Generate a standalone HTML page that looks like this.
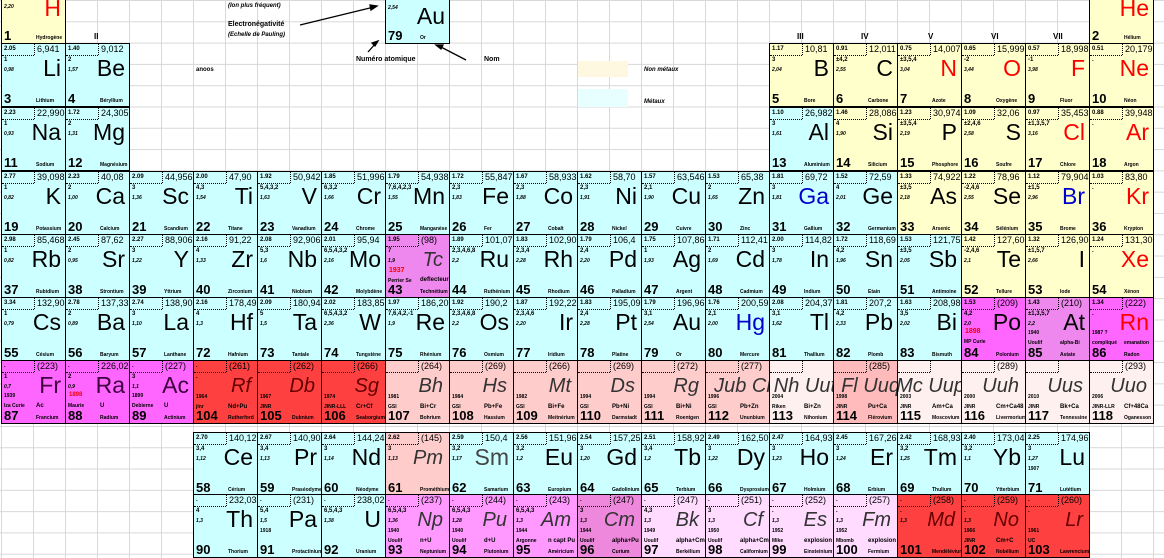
<!DOCTYPE html>
<html><head><meta charset="utf-8">
<style>
html,body{margin:0;padding:0}
body{width:1164px;height:557px;position:relative;overflow:hidden;background-color:#fff;
background-image:linear-gradient(to right,#d8d8d8 1px,transparent 1px),linear-gradient(to bottom,#d8d8d8 1px,transparent 1px);
background-size:32px 21.3px;background-position:1px 0;font-family:"Liberation Sans",sans-serif}
.e{position:absolute;width:65px;height:64px;border:1px solid #000;box-sizing:border-box;overflow:hidden;color:#000}
.e::before{content:"";position:absolute;left:0;top:11px;width:32px;border-top:1px dotted #000}
.e i,.e b{position:absolute;white-space:nowrap;font-style:normal}
.en{left:2px;top:2px;font-weight:bold;font-size:6px}
.m{left:32px;top:0;font-size:9px;border-left:1px dotted #000;padding-left:2px;height:11px;line-height:11px}
.o{left:2px;top:13px;font-weight:bold;font-size:6px}
.r{left:2px;top:23px;font-style:italic!important;font-weight:bold;font-size:5px}
.s{right:4px;top:11px;font-size:23px;font-weight:normal}
.s.it{font-style:italic!important;color:#333;font-size:20px;top:14px;right:6px}
.n{left:2px;bottom:0px;font-weight:bold;font-size:13px}
.nm{left:34px;bottom:2px;font-weight:bold;font-size:5px}
.c{background:#ccffff}.y{background:#ffffcc}.m1{background:#ff66ff}.v{background:#ee88ee}
.rd{background:#ff4040}.p{background:#ffcccc}.q{background:#fff0f0}.f{background:#ffbbbb}
.a{background:#ff99ff}.a2{background:#ee88dd}.l{background:#ffdcff}
.red .s{color:#f00}.blu .s{color:#00c}
.lbl{position:absolute;font-weight:bold;font-size:8px}
.t{position:absolute;font-size:6px;font-weight:bold}
</style></head><body>

<div class="lbl" style="left:94px;top:32px">II</div>
<div class="lbl" style="left:797px;top:32px">III</div>
<div class="lbl" style="left:861px;top:32px">IV</div>
<div class="lbl" style="left:928px;top:32px">V</div>
<div class="lbl" style="left:991px;top:32px">VI</div>
<div class="lbl" style="left:1053px;top:32px">VII</div>

<div class="t" style="left:228px;top:3px;font-style:italic">(Ion plus fréquent)</div>
<div class="t" style="left:228px;top:21px;font-size:7px">Electronégativité</div>
<div class="t" style="left:228px;top:32px;font-style:italic">(Echelle de Pauling)</div>
<div class="t" style="left:356px;top:56px;font-size:7px">Numéro atomique</div>
<div class="t" style="left:484px;top:56px;font-size:7px">Nom</div>
<div class="t" style="left:196px;top:67px">anoos</div>
<div style="position:absolute;left:578px;top:61px;width:50px;height:16px;background:#fff8e0"></div>
<div style="position:absolute;left:578px;top:89px;width:50px;height:18px;background:#e8ffff"></div>
<div class="t" style="left:644px;top:67px;font-style:italic">Non métaux</div>
<div class="t" style="left:644px;top:99px;font-style:italic">Métaux</div>
<svg style="position:absolute;left:0;top:0" width="1164" height="557">
<g stroke="#000" stroke-width="1.3" fill="#000">
<line x1="300" y1="25" x2="374" y2="7"/><polygon points="377,6 370,5 371,10"/>
<line x1="368" y1="52" x2="376" y2="43"/><polygon points="378,41 372,43 375,46"/>
<line x1="466" y1="60" x2="439" y2="46"/><polygon points="436,45 443,45 441,49"/>
</g></svg>

<div class="e c" style="left:385px;top:-20px"><i class="r" style="top:24px">2,54</i><b class="s" style="top:22px">Au</b><b class="n">79</b><i class="nm">Or</i></div>

<div class="e y red" style="left:1px;top:-20px"><i class="r">2,20</i><b class="s" style="top:14px">H</b><b class="n">1</b><i class="nm">Hydrogène</i></div>
<div class="e y red" style="left:1089px;top:-20px"><i class="o">.</i><b class="s" style="top:14px">He</b><b class="n">2</b><i class="nm">Hélium</i></div>

<div class="e c" style="left:1px;top:43px"><i class="en">2.05</i><i class="m">6,941</i><i class="o">1</i><i class="r">0,98</i><b class="s">Li</b><b class="n">3</b><i class="nm">Lithium</i></div>
<div class="e c" style="left:65px;top:43px"><i class="en">1.40</i><i class="m">9,012</i><i class="o">2</i><i class="r">1,57</i><b class="s">Be</b><b class="n">4</b><i class="nm">Béryllium</i></div>
<div class="e y" style="left:769px;top:43px"><i class="en">1.17</i><i class="m">10,81</i><i class="o">3</i><i class="r">2,04</i><b class="s">B</b><b class="n">5</b><i class="nm">Bore</i></div>
<div class="e y" style="left:833px;top:43px"><i class="en">0.91</i><i class="m">12,011</i><i class="o">±4,2</i><i class="r">2,55</i><b class="s">C</b><b class="n">6</b><i class="nm">Carbone</i></div>
<div class="e y red" style="left:897px;top:43px"><i class="en">0.75</i><i class="m">14,007</i><i class="o">±3,5,4</i><i class="r">3,04</i><b class="s">N</b><b class="n">7</b><i class="nm">Azote</i></div>
<div class="e y red" style="left:961px;top:43px"><i class="en">0.65</i><i class="m">15,999</i><i class="o">-2</i><i class="r">3,44</i><b class="s">O</b><b class="n">8</b><i class="nm">Oxygène</i></div>
<div class="e y red" style="left:1025px;top:43px"><i class="en">0.57</i><i class="m">18,998</i><i class="o">-1</i><i class="r">3,98</i><b class="s">F</b><b class="n">9</b><i class="nm">Fluor</i></div>
<div class="e y red" style="left:1089px;top:43px"><i class="en">0.51</i><i class="m">20,179</i><i class="o">.</i><b class="s">Ne</b><b class="n">10</b><i class="nm">Néon</i></div>

<div class="e c" style="left:1px;top:107px"><i class="en">2.23</i><i class="m">22,990</i><i class="o">1</i><i class="r">0,93</i><b class="s">Na</b><b class="n">11</b><i class="nm">Sodium</i></div>
<div class="e c" style="left:65px;top:107px"><i class="en">1.72</i><i class="m">24,305</i><i class="o">2</i><i class="r">1,31</i><b class="s">Mg</b><b class="n">12</b><i class="nm">Magnésium</i></div>
<div class="e c" style="left:769px;top:107px"><i class="en">1.10</i><i class="m">26,982</i><i class="o">3</i><i class="r">1,61</i><b class="s">Al</b><b class="n">13</b><i class="nm">Aluminium</i></div>
<div class="e y" style="left:833px;top:107px"><i class="en">1.46</i><i class="m">28,086</i><i class="o">4</i><i class="r">1,90</i><b class="s">Si</b><b class="n">14</b><i class="nm">Silicium</i></div>
<div class="e y" style="left:897px;top:107px"><i class="en">1.23</i><i class="m">30,974</i><i class="o">±3,5,4</i><i class="r">2,19</i><b class="s">P</b><b class="n">15</b><i class="nm">Phosphore</i></div>
<div class="e y" style="left:961px;top:107px"><i class="en">1.09</i><i class="m">32,06</i><i class="o">±2,4,6</i><i class="r">2,58</i><b class="s">S</b><b class="n">16</b><i class="nm">Soufre</i></div>
<div class="e y red" style="left:1025px;top:107px"><i class="en">0.97</i><i class="m">35,453</i><i class="o">±1,3,5,7</i><i class="r">3,16</i><b class="s">Cl</b><b class="n">17</b><i class="nm">Chlore</i></div>
<div class="e y red" style="left:1089px;top:107px"><i class="en">0.88</i><i class="m">39,948</i><i class="o">.</i><b class="s">Ar</b><b class="n">18</b><i class="nm">Argon</i></div>

<div class="e c" style="left:1px;top:171px"><i class="en">2.77</i><i class="m">39,098</i><i class="o">1</i><i class="r">0,82</i><b class="s">K</b><b class="n">19</b><i class="nm">Potassium</i></div>
<div class="e c" style="left:65px;top:171px"><i class="en">2.23</i><i class="m">40,08</i><i class="o">2</i><i class="r">1,00</i><b class="s">Ca</b><b class="n">20</b><i class="nm">Calcium</i></div>
<div class="e c" style="left:129px;top:171px"><i class="en">2.09</i><i class="m">44,956</i><i class="o">3</i><i class="r">1,36</i><b class="s">Sc</b><b class="n">21</b><i class="nm">Scandium</i></div>
<div class="e c" style="left:193px;top:171px"><i class="en">2.00</i><i class="m">47,90</i><i class="o">4,3</i><i class="r">1,54</i><b class="s">Ti</b><b class="n">22</b><i class="nm">Titane</i></div>
<div class="e c" style="left:257px;top:171px"><i class="en">1.92</i><i class="m">50,942</i><i class="o">5,4,3,2</i><i class="r">1,63</i><b class="s">V</b><b class="n">23</b><i class="nm">Vanadium</i></div>
<div class="e c" style="left:321px;top:171px"><i class="en">1.85</i><i class="m">51,996</i><i class="o">6,3,2</i><i class="r">1,66</i><b class="s">Cr</b><b class="n">24</b><i class="nm">Chrome</i></div>
<div class="e c" style="left:385px;top:171px"><i class="en">1.79</i><i class="m">54,938</i><i class="o">7,6,4,2,3</i><i class="r">1,55</i><b class="s">Mn</b><b class="n">25</b><i class="nm">Manganèse</i></div>
<div class="e c" style="left:449px;top:171px"><i class="en">1.72</i><i class="m">55,847</i><i class="o">2,3</i><i class="r">1,83</i><b class="s">Fe</b><b class="n">26</b><i class="nm">Fer</i></div>
<div class="e c" style="left:513px;top:171px"><i class="en">1.67</i><i class="m">58,933</i><i class="o">2,3</i><i class="r">1,88</i><b class="s">Co</b><b class="n">27</b><i class="nm">Cobalt</i></div>
<div class="e c" style="left:577px;top:171px"><i class="en">1.62</i><i class="m">58,70</i><i class="o">2,3</i><i class="r">1,91</i><b class="s">Ni</b><b class="n">28</b><i class="nm">Nickel</i></div>
<div class="e c" style="left:641px;top:171px"><i class="en">1.57</i><i class="m">63,546</i><i class="o">2,1</i><i class="r">1,90</i><b class="s">Cu</b><b class="n">29</b><i class="nm">Cuivre</i></div>
<div class="e c" style="left:705px;top:171px"><i class="en">1.53</i><i class="m">65,38</i><i class="o">2</i><i class="r">1,65</i><b class="s">Zn</b><b class="n">30</b><i class="nm">Zinc</i></div>
<div class="e c blu" style="left:769px;top:171px"><i class="en">1.81</i><i class="m">69,72</i><i class="o">3</i><i class="r">1,81</i><b class="s">Ga</b><b class="n">31</b><i class="nm">Gallium</i></div>
<div class="e c" style="left:833px;top:171px"><i class="en">1.52</i><i class="m">72,59</i><i class="o">4</i><i class="r">2,01</i><b class="s">Ge</b><b class="n">32</b><i class="nm">Germanium</i></div>
<div class="e y" style="left:897px;top:171px"><i class="en">1.33</i><i class="m">74,922</i><i class="o">±3,5</i><i class="r">2,18</i><b class="s">As</b><b class="n">33</b><i class="nm">Arsenic</i></div>
<div class="e y" style="left:961px;top:171px"><i class="en">1.22</i><i class="m">78,96</i><i class="o">-2,4,6</i><i class="r">2,55</i><b class="s">Se</b><b class="n">34</b><i class="nm">Sélénium</i></div>
<div class="e y blu" style="left:1025px;top:171px"><i class="en">1.12</i><i class="m">79,904</i><i class="o">±1,5</i><i class="r">2,96</i><b class="s">Br</b><b class="n">35</b><i class="nm">Brome</i></div>
<div class="e y red" style="left:1089px;top:171px"><i class="en">1.03</i><i class="m">83,80</i><i class="o">.</i><b class="s">Kr</b><b class="n">36</b><i class="nm">Krypton</i></div>

<div class="e c" style="left:1px;top:234px"><i class="en">2.98</i><i class="m">85,468</i><i class="o">1</i><i class="r">0,82</i><b class="s">Rb</b><b class="n">37</b><i class="nm">Rubidium</i></div>
<div class="e c" style="left:65px;top:234px"><i class="en">2.45</i><i class="m">87,62</i><i class="o">2</i><i class="r">0,95</i><b class="s">Sr</b><b class="n">38</b><i class="nm">Strontium</i></div>
<div class="e c" style="left:129px;top:234px"><i class="en">2.27</i><i class="m">88,906</i><i class="o">3</i><i class="r">1,22</i><b class="s">Y</b><b class="n">39</b><i class="nm">Yttrium</i></div>
<div class="e c" style="left:193px;top:234px"><i class="en">2.16</i><i class="m">91,22</i><i class="o">4</i><i class="r">1,33</i><b class="s">Zr</b><b class="n">40</b><i class="nm">Zirconium</i></div>
<div class="e c" style="left:257px;top:234px"><i class="en">2.08</i><i class="m">92,906</i><i class="o">5,3</i><i class="r">1,6</i><b class="s">Nb</b><b class="n">41</b><i class="nm">Niobium</i></div>
<div class="e c" style="left:321px;top:234px"><i class="en">2.01</i><i class="m">95,94</i><i class="o">6,5,4,3,2</i><i class="r">2,16</i><b class="s">Mo</b><b class="n">42</b><i class="nm">Molybdène</i></div>
<div class="e v" style="left:385px;top:234px"><i class="en">1.95</i><i class="m">(98)</i><i class="o">7</i><i class="r">1,9</i><b class="s it">Tc</b><b style="left:3px;top:32px;font-size:7px;color:#e00;font-weight:bold">1937</b><i class="t" style="left:2px;top:43px;font-size:5px">Perrier Se</i><i class="t" style="left:34px;top:42px;font-size:6px">deflecteur</i><b class="n">43</b><i class="nm">Technétium</i></div>
<div class="e c" style="left:449px;top:234px"><i class="en">1.89</i><i class="m">101,07</i><i class="o">2,3,4,6,8</i><i class="r">2,2</i><b class="s">Ru</b><b class="n">44</b><i class="nm">Ruthénium</i></div>
<div class="e c" style="left:513px;top:234px"><i class="en">1.83</i><i class="m">102,906</i><i class="o">2,3,4</i><i class="r">2,28</i><b class="s">Rh</b><b class="n">45</b><i class="nm">Rhodium</i></div>
<div class="e c" style="left:577px;top:234px"><i class="en">1.79</i><i class="m">106,4</i><i class="o">2,4</i><i class="r">2,20</i><b class="s">Pd</b><b class="n">46</b><i class="nm">Palladium</i></div>
<div class="e c" style="left:641px;top:234px"><i class="en">1.75</i><i class="m">107,868</i><i class="o">1</i><i class="r">1,93</i><b class="s">Ag</b><b class="n">47</b><i class="nm">Argent</i></div>
<div class="e c" style="left:705px;top:234px"><i class="en">1.71</i><i class="m">112,41</i><i class="o">2</i><i class="r">1,69</i><b class="s">Cd</b><b class="n">48</b><i class="nm">Cadmium</i></div>
<div class="e c" style="left:769px;top:234px"><i class="en">2.00</i><i class="m">114,82</i><i class="o">3</i><i class="r">1,78</i><b class="s">In</b><b class="n">49</b><i class="nm">Indium</i></div>
<div class="e c" style="left:833px;top:234px"><i class="en">1.72</i><i class="m">118,69</i><i class="o">4,2</i><i class="r">1,96</i><b class="s">Sn</b><b class="n">50</b><i class="nm">Etain</i></div>
<div class="e c" style="left:897px;top:234px"><i class="en">1.53</i><i class="m">121,75</i><i class="o">±3,5</i><i class="r">2,05</i><b class="s">Sb</b><b class="n">51</b><i class="nm">Antimoine</i></div>
<div class="e y" style="left:961px;top:234px"><i class="en">1.42</i><i class="m">127,60</i><i class="o">-2,4,6</i><i class="r">2,1</i><b class="s">Te</b><b class="n">52</b><i class="nm">Tellure</i></div>
<div class="e y" style="left:1025px;top:234px"><i class="en">1.32</i><i class="m">126,905</i><i class="o">±1,5,7</i><i class="r">2,66</i><b class="s">I</b><b class="n">53</b><i class="nm">Iode</i></div>
<div class="e y red" style="left:1089px;top:234px"><i class="en">1.24</i><i class="m">131,30</i><i class="o">.</i><b class="s">Xe</b><b class="n">54</b><i class="nm">Xénon</i></div>

<div class="e c" style="left:1px;top:297px"><i class="en">3.34</i><i class="m">132,905</i><i class="o">1</i><i class="r">0,79</i><b class="s">Cs</b><b class="n">55</b><i class="nm">Césium</i></div>
<div class="e c" style="left:65px;top:297px"><i class="en">2.78</i><i class="m">137,33</i><i class="o">2</i><i class="r">0,89</i><b class="s">Ba</b><b class="n">56</b><i class="nm">Baryum</i></div>
<div class="e c" style="left:129px;top:297px"><i class="en">2.74</i><i class="m">138,906</i><i class="o">3</i><i class="r">1,10</i><b class="s">La</b><b class="n">57</b><i class="nm">Lanthane</i></div>
<div class="e c" style="left:193px;top:297px"><i class="en">2.16</i><i class="m">178,49</i><i class="o">4</i><i class="r">1,3</i><b class="s">Hf</b><b class="n">72</b><i class="nm">Hafnium</i></div>
<div class="e c" style="left:257px;top:297px"><i class="en">2.09</i><i class="m">180,948</i><i class="o">5</i><i class="r">1,5</i><b class="s">Ta</b><b class="n">73</b><i class="nm">Tantale</i></div>
<div class="e c" style="left:321px;top:297px"><i class="en">2.02</i><i class="m">183,85</i><i class="o">6,5,4,3,2</i><i class="r">2,36</i><b class="s">W</b><b class="n">74</b><i class="nm">Tungstène</i></div>
<div class="e c" style="left:385px;top:297px"><i class="en">1.97</i><i class="m">186,207</i><i class="o">7,6,4,2,-1</i><i class="r">1,9</i><b class="s">Re</b><b class="n">75</b><i class="nm">Rhénium</i></div>
<div class="e c" style="left:449px;top:297px"><i class="en">1.92</i><i class="m">190,2</i><i class="o">2,3,4,6,8</i><i class="r">2,2</i><b class="s">Os</b><b class="n">76</b><i class="nm">Osmium</i></div>
<div class="e c" style="left:513px;top:297px"><i class="en">1.87</i><i class="m">192,22</i><i class="o">2,3,4,6</i><i class="r">2,20</i><b class="s">Ir</b><b class="n">77</b><i class="nm">Iridium</i></div>
<div class="e c" style="left:577px;top:297px"><i class="en">1.83</i><i class="m">195,09</i><i class="o">2,4</i><i class="r">2,28</i><b class="s">Pt</b><b class="n">78</b><i class="nm">Platine</i></div>
<div class="e c" style="left:641px;top:297px"><i class="en">1.79</i><i class="m">196,967</i><i class="o">3,1</i><i class="r">2,54</i><b class="s">Au</b><b class="n">79</b><i class="nm">Or</i></div>
<div class="e c blu" style="left:705px;top:297px"><i class="en">1.76</i><i class="m">200,59</i><i class="o">2,1</i><i class="r">2,00</i><b class="s">Hg</b><b class="n">80</b><i class="nm">Mercure</i></div>
<div class="e c" style="left:769px;top:297px"><i class="en">2.08</i><i class="m">204,37</i><i class="o">3,1</i><i class="r">1,62</i><b class="s">Tl</b><b class="n">81</b><i class="nm">Thallium</i></div>
<div class="e c" style="left:833px;top:297px"><i class="en">1.81</i><i class="m">207,2</i><i class="o">4,2</i><i class="r">2,33</i><b class="s">Pb</b><b class="n">82</b><i class="nm">Plomb</i></div>
<div class="e c" style="left:897px;top:297px"><i class="en">1.63</i><i class="m">208,980</i><i class="o">3,5</i><i class="r">2,02</i><b class="s">Bi</b><b class="n">83</b><i class="nm">Bismuth</i></div>
<div class="e m1" style="left:961px;top:297px"><i class="en">1.53</i><i class="m">(209)</i><i class="o">4,2</i><i class="r">2,0</i><b class="s">Po</b><b style="left:3px;top:30px;font-size:7px;color:#e00;font-weight:bold">1898</b><i class="t" style="left:2px;top:41px;font-size:5px">MP Curie</i><b class="n">84</b><i class="nm">Polonium</i></div>
<div class="e v" style="left:1025px;top:297px"><i class="en">1.43</i><i class="m">(210)</i><i class="o">±1,3,5,7</i><i class="r">2,2</i><b class="s">At</b><i class="t" style="left:2px;top:32px;font-size:5px">1940</i><i class="t" style="left:2px;top:42px;font-size:5px">Uoulif</i><i class="t" style="left:34px;top:42px;font-size:5px">alpha-Bi</i><b class="n">85</b><i class="nm">Astate</i></div>
<div class="e m1 red" style="left:1089px;top:297px"><i class="en">1.34</i><i class="m">(222)</i><i class="o">.</i><b class="s">Rn</b><i class="t" style="left:2px;top:32px;font-size:5px">1987 ?</i><i class="t" style="left:2px;top:42px;font-size:5px">compliqué</i><i class="t" style="left:34px;top:42px;font-size:5px">emanation</i><b class="n">86</b><i class="nm">Radon</i></div>

<div class="e m1" style="left:1px;top:360px"><i class="en">.</i><i class="m">(223)</i><i class="o">1</i><i class="r">0,7</i><b class="s" style="color:#400040">Fr</b><i class="t" style="left:2px;top:32px;font-size:5px">1939</i><i class="t" style="left:2px;top:42px;font-size:5px">Iza Curie</i><i class="t" style="left:34px;top:42px;font-size:6px">Ac</i><b class="n">87</b><i class="nm">Francium</i></div>
<div class="e m1" style="left:65px;top:360px"><i class="en">.</i><i class="m">226,025</i><i class="o">2</i><i class="r">0,9</i><b class="s" style="color:#400040">Ra</b><b style="left:3px;top:31px;font-size:6px;color:#e00;font-weight:bold">1898</b><i class="t" style="left:2px;top:42px;font-size:5px">Maurie</i><i class="t" style="left:34px;top:42px;font-size:6px">U</i><b class="n">88</b><i class="nm">Radium</i></div>
<div class="e m1" style="left:129px;top:360px"><i class="en">.</i><i class="m">(227)</i><i class="o">3</i><i class="r">1,1</i><b class="s" style="color:#400040">Ac</b><i class="t" style="left:2px;top:32px;font-size:5px">1899</i><i class="t" style="left:2px;top:42px;font-size:5px">Debierne</i><i class="t" style="left:34px;top:42px;font-size:6px">U</i><b class="n">89</b><i class="nm">Actinium</i></div>
<div class="e rd" style="left:193px;top:360px"><i class="en">.</i><i class="m">(261)</i><i class="o">.</i><b class="s it" style="color:#600">Rf</b><i class="t" style="left:2px;top:33px;font-size:5px">1964</i><i class="t" style="left:2px;top:43px;font-size:5px">jinr</i><i class="t" style="left:34px;top:43px;font-size:6px">Nd+Pu</i><b class="n">104</b><i class="nm">Rutherford</i></div>
<div class="e rd" style="left:257px;top:360px"><i class="m">(262)</i><b class="s it" style="color:#600">Db</b><i class="t" style="left:2px;top:33px;font-size:5px">1967</i><i class="t" style="left:2px;top:43px;font-size:5px">JINR</i><b class="n">105</b><i class="nm">Dubnium</i></div>
<div class="e rd" style="left:321px;top:360px"><i class="m">(266)</i><b class="s it" style="color:#600">Sg</b><i class="t" style="left:2px;top:33px;font-size:5px">1974</i><i class="t" style="left:2px;top:43px;font-size:5px">JINR-LLL</i><i class="t" style="left:34px;top:43px;font-size:6px">Cr+Cf</i><b class="n">106</b><i class="nm">Seaborgium</i></div>
<div class="e p" style="left:385px;top:360px"><i class="m">(264)</i><b class="s it">Bh</b><i class="t" style="left:2px;top:33px;font-size:5px">1981</i><i class="t" style="left:2px;top:43px;font-size:5px">GSI</i><i class="t" style="left:34px;top:43px;font-size:6px">Bi+Cr</i><b class="n">107</b><i class="nm">Bohrium</i></div>
<div class="e p" style="left:449px;top:360px"><i class="m">(269)</i><b class="s it">Hs</b><i class="t" style="left:2px;top:33px;font-size:5px">1984</i><i class="t" style="left:2px;top:43px;font-size:5px">GSI</i><i class="t" style="left:34px;top:43px;font-size:6px">Pb+Fe</i><b class="n">108</b><i class="nm">Hassium</i></div>
<div class="e p" style="left:513px;top:360px"><i class="m">(266)</i><b class="s it">Mt</b><i class="t" style="left:2px;top:33px;font-size:5px">1982</i><i class="t" style="left:2px;top:43px;font-size:5px">GSI</i><i class="t" style="left:34px;top:43px;font-size:6px">Bi+Fe</i><b class="n">109</b><i class="nm">Meitnérium</i></div>
<div class="e p" style="left:577px;top:360px"><i class="m">(269)</i><b class="s it">Ds</b><i class="t" style="left:2px;top:33px;font-size:5px">1994</i><i class="t" style="left:2px;top:43px;font-size:5px">GSI</i><i class="t" style="left:34px;top:43px;font-size:6px">Pb+Ni</i><b class="n">110</b><i class="nm">Darmstadt</i></div>
<div class="e p" style="left:641px;top:360px"><i class="m">(272)</i><b class="s it">Rg</b><i class="t" style="left:2px;top:33px;font-size:5px">1994</i><i class="t" style="left:2px;top:43px;font-size:5px">GSI</i><i class="t" style="left:34px;top:43px;font-size:6px">Bi+Ni</i><b class="n">111</b><i class="nm">Roentgen</i></div>
<div class="e p" style="left:705px;top:360px"><i class="m">(277)</i><b class="s it" style="right:-4px">Jub Cr</b><i class="t" style="left:2px;top:33px;font-size:5px">1996</i><i class="t" style="left:2px;top:43px;font-size:5px">GSI</i><i class="t" style="left:34px;top:43px;font-size:6px">Pb+Zn</i><b class="n">112</b><i class="nm">Ununbium</i></div>
<div class="e q" style="left:769px;top:360px"><i class="m"></i><b class="s it" style="right:-3px">Nh Uut</b><i class="t" style="left:2px;top:33px;font-size:5px">2004</i><i class="t" style="left:2px;top:43px;font-size:5px">Riken</i><i class="t" style="left:34px;top:43px;font-size:6px">Bi+Zn</i><b class="n">113</b><i class="nm">Nihonium</i></div>
<div class="e f" style="left:833px;top:360px"><i class="m">(285)</i><b class="s it" style="right:-3px">Fl Uuq</b><i class="t" style="left:2px;top:33px;font-size:5px">1998</i><i class="t" style="left:2px;top:43px;font-size:5px">JINR</i><i class="t" style="left:34px;top:43px;font-size:6px">Pu+Ca</i><b class="n">114</b><i class="nm">Flérovium</i></div>
<div class="e q" style="left:897px;top:360px"><i class="m"></i><b class="s it" style="right:-4px">Mc Uup</b><i class="t" style="left:2px;top:33px;font-size:5px">2003</i><i class="t" style="left:2px;top:43px;font-size:5px">JINR</i><i class="t" style="left:34px;top:43px;font-size:6px">Am+Ca</i><b class="n">115</b><i class="nm">Moscovium</i></div>
<div class="e q" style="left:961px;top:360px"><i class="m">(289)</i><b class="s it">Uuh</b><i class="t" style="left:2px;top:33px;font-size:5px">2000</i><i class="t" style="left:2px;top:43px;font-size:5px">JINR</i><i class="t" style="left:34px;top:43px;font-size:6px">Cm+Ca48</i><b class="n">116</b><i class="nm">Livermorium</i></div>
<div class="e q" style="left:1025px;top:360px"><i class="m"></i><b class="s it">Uus</b><i class="t" style="left:2px;top:33px;font-size:5px">2010</i><i class="t" style="left:2px;top:43px;font-size:5px">JINR</i><i class="t" style="left:34px;top:43px;font-size:6px">Bk+Ca</i><b class="n">117</b><i class="nm">Tennessine</i></div>
<div class="e q" style="left:1089px;top:360px"><i class="m">(293)</i><b class="s it">Uuo</b><i class="t" style="left:2px;top:33px;font-size:5px">2006</i><i class="t" style="left:2px;top:43px;font-size:5px">JINR-LLR</i><i class="t" style="left:34px;top:43px;font-size:6px">Cf+48Ca</i><b class="n">118</b><i class="nm">Oganesson</i></div>

<div class="e c" style="left:193px;top:432px"><i class="en">2.70</i><i class="m">140,12</i><i class="o">3,4</i><i class="r">1,12</i><b class="s">Ce</b><b class="n">58</b><i class="nm">Cérium</i></div>
<div class="e c" style="left:257px;top:432px"><i class="en">2.67</i><i class="m">140,908</i><i class="o">3,4</i><i class="r">1,13</i><b class="s">Pr</b><b class="n">59</b><i class="nm">Praséodyme</i></div>
<div class="e c" style="left:321px;top:432px"><i class="en">2.64</i><i class="m">144,24</i><i class="o">3</i><i class="r">1,14</i><b class="s">Nd</b><b class="n">60</b><i class="nm">Néodyme</i></div>
<div class="e p" style="left:385px;top:432px"><i class="en">2.62</i><i class="m">(145)</i><i class="o">3</i><i class="r">1,13</i><b class="s it">Pm</b><b class="n">61</b><i class="nm">Prométhium</i></div>
<div class="e c" style="left:449px;top:432px"><i class="en">2.59</i><i class="m">150,4</i><i class="o">3,2</i><i class="r">1,17</i><b class="s" style="color:#444">Sm</b><b class="n">62</b><i class="nm">Samarium</i></div>
<div class="e c" style="left:513px;top:432px"><i class="en">2.56</i><i class="m">151,96</i><i class="o">3,2</i><i class="r">1,2</i><b class="s">Eu</b><b class="n">63</b><i class="nm">Europium</i></div>
<div class="e c" style="left:577px;top:432px"><i class="en">2.54</i><i class="m">157,25</i><i class="o">3</i><i class="r">1,20</i><b class="s">Gd</b><b class="n">64</b><i class="nm">Gadolinium</i></div>
<div class="e c" style="left:641px;top:432px"><i class="en">2.51</i><i class="m">158,925</i><i class="o">3,4</i><i class="r">1,2</i><b class="s">Tb</b><b class="n">65</b><i class="nm">Terbium</i></div>
<div class="e c" style="left:705px;top:432px"><i class="en">2.49</i><i class="m">162,50</i><i class="o">3</i><i class="r">1,22</i><b class="s">Dy</b><b class="n">66</b><i class="nm">Dysprosium</i></div>
<div class="e c" style="left:769px;top:432px"><i class="en">2.47</i><i class="m">164,930</i><i class="o">3</i><i class="r">1,23</i><b class="s">Ho</b><b class="n">67</b><i class="nm">Holmium</i></div>
<div class="e c" style="left:833px;top:432px"><i class="en">2.45</i><i class="m">167,26</i><i class="o">3</i><i class="r">1,24</i><b class="s">Er</b><b class="n">68</b><i class="nm">Erbium</i></div>
<div class="e c" style="left:897px;top:432px"><i class="en">2.42</i><i class="m">168,934</i><i class="o">3,2</i><i class="r">1,25</i><b class="s">Tm</b><b class="n">69</b><i class="nm">Thulium</i></div>
<div class="e c" style="left:961px;top:432px"><i class="en">2.40</i><i class="m">173,04</i><i class="o">3,2</i><i class="r">1,1</i><b class="s">Yb</b><b class="n">70</b><i class="nm">Ytterbium</i></div>
<div class="e c" style="left:1025px;top:432px"><i class="en">2.25</i><i class="m">174,967</i><i class="o">3</i><i class="r">1,27</i><b class="s">Lu</b><i class="t" style="left:2px;top:33px;font-size:5px">1907</i><b class="n">71</b><i class="nm">Lutétium</i></div>

<div class="e c" style="left:193px;top:494px"><i class="en">.</i><i class="m">232,038</i><i class="o">4</i><i class="r">1,3</i><b class="s">Th</b><b class="n">90</b><i class="nm">Thorium</i></div>
<div class="e c" style="left:257px;top:494px"><i class="en">.</i><i class="m">(231)</i><i class="o">5,4</i><i class="r">1,5</i><b class="s">Pa</b><i class="t" style="left:2px;top:33px;font-size:5px">1918</i><b class="n">91</b><i class="nm">Protactinium</i></div>
<div class="e c" style="left:321px;top:494px"><i class="en">.</i><i class="m">238,029</i><i class="o">6,5,4,3</i><i class="r">1,38</i><b class="s">U</b><b class="n">92</b><i class="nm">Uranium</i></div>
<div class="e a" style="left:385px;top:494px"><i class="en">.</i><i class="m">(237)</i><i class="o">6,5,4,3</i><i class="r">1,36</i><b class="s it">Np</b><i class="t" style="left:2px;top:33px;font-size:5px">1940</i><i class="t" style="left:2px;top:43px;font-size:5px">Uoulif</i><i class="t" style="left:34px;top:43px;font-size:6px">n+U</i><b class="n">93</b><i class="nm">Neptunium</i></div>
<div class="e a" style="left:449px;top:494px"><i class="en">.</i><i class="m">(244)</i><i class="o">6,5,4,3</i><i class="r">1,28</i><b class="s it">Pu</b><i class="t" style="left:2px;top:33px;font-size:5px">1940</i><i class="t" style="left:2px;top:43px;font-size:5px">Uoulif</i><i class="t" style="left:34px;top:43px;font-size:6px">d+U</i><b class="n">94</b><i class="nm">Plutonium</i></div>
<div class="e a" style="left:513px;top:494px"><i class="en">.</i><i class="m">(243)</i><i class="o">6,5,4,3</i><i class="r">1,3</i><b class="s it">Am</b><i class="t" style="left:2px;top:33px;font-size:5px">1944</i><i class="t" style="left:2px;top:43px;font-size:5px">Argonne</i><i class="t" style="left:34px;top:43px;font-size:6px">n capt Pu</i><b class="n">95</b><i class="nm">Américium</i></div>
<div class="e a2" style="left:577px;top:494px"><i class="en">.</i><i class="m">(247)</i><i class="o">3</i><i class="r">1,3</i><b class="s it">Cm</b><i class="t" style="left:2px;top:33px;font-size:5px">1944</i><i class="t" style="left:2px;top:43px;font-size:5px">Uoulif</i><i class="t" style="left:34px;top:43px;font-size:6px">alpha+Pu</i><b class="n">96</b><i class="nm">Curium</i></div>
<div class="e l" style="left:641px;top:494px"><i class="en">.</i><i class="m">(247)</i><i class="o">4,3</i><i class="r">1,3</i><b class="s it">Bk</b><i class="t" style="left:2px;top:33px;font-size:5px">1949</i><i class="t" style="left:2px;top:43px;font-size:5px">Uoulif</i><i class="t" style="left:34px;top:43px;font-size:6px">alpha+Cm</i><b class="n">97</b><i class="nm">Berkélium</i></div>
<div class="e l" style="left:705px;top:494px"><i class="en">.</i><i class="m">(251)</i><i class="o">3</i><i class="r">1,3</i><b class="s it">Cf</b><i class="t" style="left:2px;top:33px;font-size:5px">1950</i><i class="t" style="left:2px;top:43px;font-size:5px">Uoulif</i><i class="t" style="left:34px;top:43px;font-size:6px">alpha+Cm</i><b class="n">98</b><i class="nm">Californium</i></div>
<div class="e l" style="left:769px;top:494px"><i class="en">.</i><i class="m">(252)</i><i class="o">.</i><i class="r">1,3</i><b class="s it">Es</b><i class="t" style="left:2px;top:33px;font-size:5px">1952</i><i class="t" style="left:2px;top:43px;font-size:5px">Mike</i><i class="t" style="left:34px;top:43px;font-size:6px">explosion</i><b class="n">99</b><i class="nm">Einsteinium</i></div>
<div class="e l" style="left:833px;top:494px"><i class="en">.</i><i class="m">(257)</i><i class="o">.</i><i class="r">1,3</i><b class="s it">Fm</b><i class="t" style="left:2px;top:33px;font-size:5px">1952</i><i class="t" style="left:2px;top:43px;font-size:5px">Mbomb</i><i class="t" style="left:34px;top:43px;font-size:6px">explosion</i><b class="n">100</b><i class="nm">Fermium</i></div>
<div class="e rd" style="left:897px;top:494px"><i class="en">.</i><i class="m">(258)</i><i class="o">.</i><i class="r">1,3</i><b class="s it" style="color:#600">Md</b><b class="n">101</b><i class="nm">Mendélévium</i></div>
<div class="e rd" style="left:961px;top:494px"><i class="en">.</i><i class="m">(259)</i><i class="o">.</i><i class="r">1,3</i><b class="s it" style="color:#600">No</b><i class="t" style="left:2px;top:33px;font-size:5px">1966</i><i class="t" style="left:2px;top:43px;font-size:5px">JINR</i><i class="t" style="left:34px;top:43px;font-size:6px">Cm+C</i><b class="n">102</b><i class="nm">Nobélium</i></div>
<div class="e rd" style="left:1025px;top:494px"><i class="en">.</i><i class="m">(260)</i><i class="o">.</i><b class="s it" style="color:#600">Lr</b><i class="t" style="left:2px;top:33px;font-size:5px">1961</i><i class="t" style="left:2px;top:43px;font-size:5px">UC</i><b class="n">103</b><i class="nm">Lawrencium</i></div>

</body></html>
